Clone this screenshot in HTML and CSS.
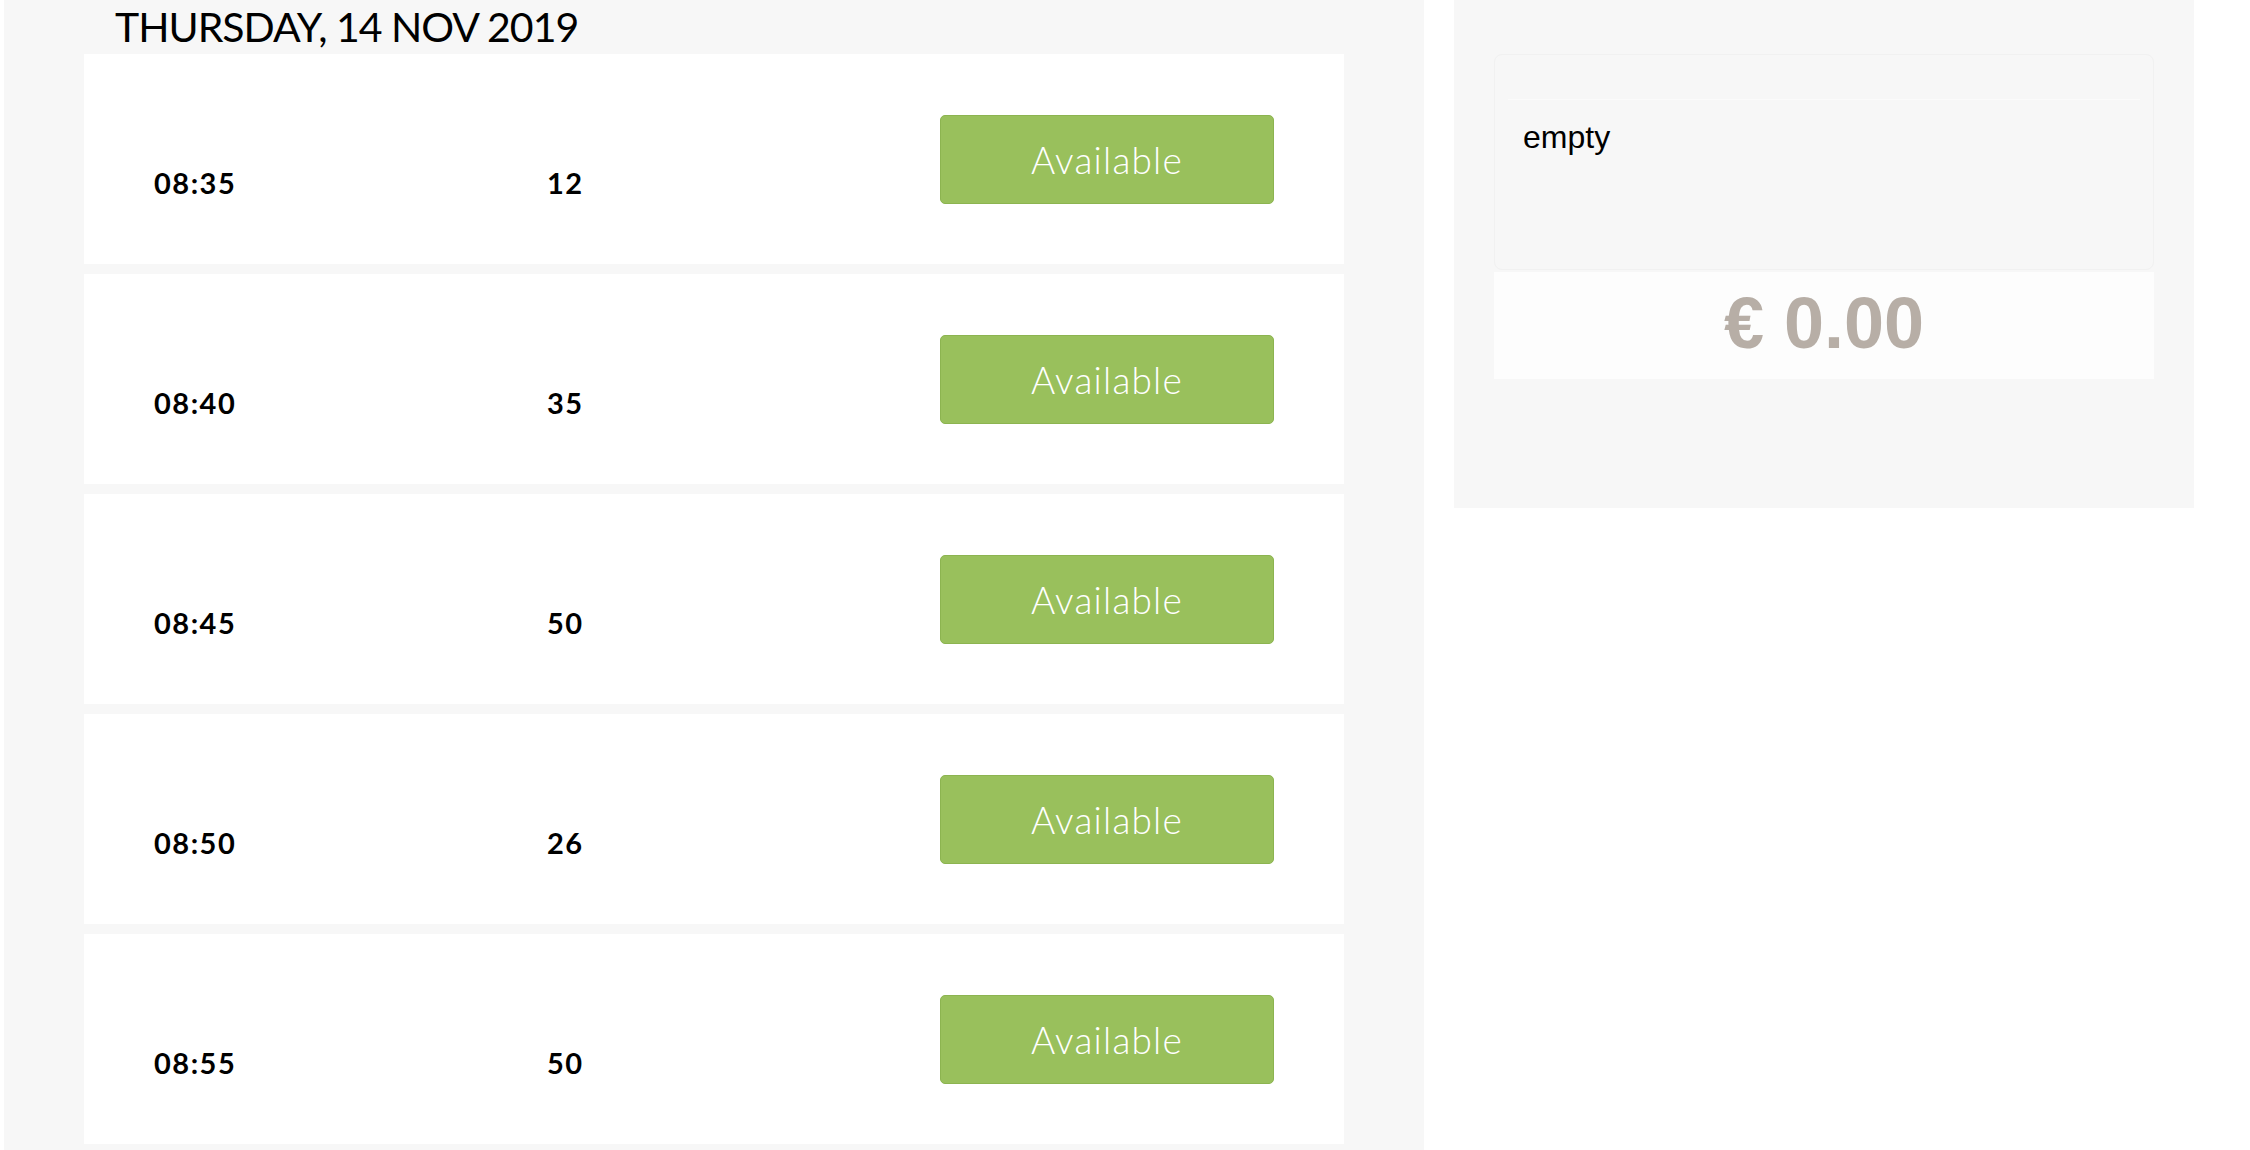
FILE: index.html
```html
<!DOCTYPE html>
<html lang="en">
<head>
    <meta charset="UTF-8">
    <meta name="viewport" content="width=device-width, initial-scale=1.0">
    <title>Timeslots</title>
    <link rel="stylesheet" href="styles.css">
</head>
<body>
    <div class="page">
        <section class="schedule">
            <h1 class="day-title">THURSDAY, 14 NOV 2019</h1>

            <div class="slot">
                <div class="slot-time">08:35</div>
                <div class="slot-seats">12</div>
                <div class="slot-action"><button class="btn-available">Available</button></div>
            </div>
            <div class="slot">
                <div class="slot-time">08:40</div>
                <div class="slot-seats">35</div>
                <div class="slot-action"><button class="btn-available">Available</button></div>
            </div>
            <div class="slot">
                <div class="slot-time">08:45</div>
                <div class="slot-seats">50</div>
                <div class="slot-action"><button class="btn-available">Available</button></div>
            </div>
            <div class="slot">
                <div class="slot-time">08:50</div>
                <div class="slot-seats">26</div>
                <div class="slot-action"><button class="btn-available">Available</button></div>
            </div>
            <div class="slot">
                <div class="slot-time">08:55</div>
                <div class="slot-seats">50</div>
                <div class="slot-action"><button class="btn-available">Available</button></div>
            </div>
        </section>

        <aside class="basket">
            <div class="basket-card">
                <div class="basket-header"></div>
                <div class="basket-body">empty</div>
            </div>
            <div class="basket-total">€ 0.00</div>
        </aside>
    </div>
</body>
</html>
```

FILE: styles.css
```css
body {
    margin: 0;
    font-family: "Lato", "Liberation Sans", sans-serif;
    color: #000;
}
.page {
    display: flex;
    align-items: flex-start;
    gap: 30px;
    padding-left: 4px;
}

/* left column: the day's time slots */
.schedule {
    width: 1420px;
    box-sizing: border-box;
    background-color: #f7f7f7;
    padding: 0 80px 6px;
}
.day-title {
    margin: 0 0 0 31px;
    font-size: 41px;
    font-weight: 400;
    letter-spacing: -1px;
    line-height: 54px;
}
.slot {
    display: grid;
    grid-template-columns: 393px 393px 334px;
    align-items: center;
    height: 210px;
    padding: 0 70px;
    margin-bottom: 10px;
    background-color: #fff;
}
.slot-time,
.slot-seats {
    font-size: 29px;
    font-weight: 700;
    letter-spacing: 1.5px;
    line-height: 42px;
    padding-top: 48px;
}
.btn-available {
    display: block;
    width: 334px;
    height: 89px;
    background-color: #99c05c;
    border: 1px solid #8cb450;
    border-radius: 5px;
    color: #fff;
    font-family: "Lato", sans-serif;
    font-size: 37px;
    font-weight: 300;
    letter-spacing: 1.2px;
    cursor: pointer;
}
.btn-available:hover {
    background-color: #8cb450;
}

/* right column: basket */
.basket {
    width: 740px;
    height: 508px;
    box-sizing: border-box;
    background-color: #f7f7f7;
    padding: 54px 40px 0;
    font-family: "Liberation Sans", Arial, sans-serif;
}
.basket-card {
    height: 216px;
    box-sizing: border-box;
    border: 1px solid #f1f1f1;
    border-radius: 8px;
}
.basket-header {
    height: 44px;
    margin: 0 13px;
    border-bottom: 1px solid #fbfbfb;
}
.basket-body {
    padding: 13px 28px;
    font-size: 32px;
    line-height: 48px;
}
.basket-total {
    margin-top: 2px;
    padding: 12px 0 16px;
    background-color: #fdfdfd;
    text-align: center;
    color: #b7aea6;
    font-size: 72px;
    font-weight: 700;
    line-height: 79px;
}
```
